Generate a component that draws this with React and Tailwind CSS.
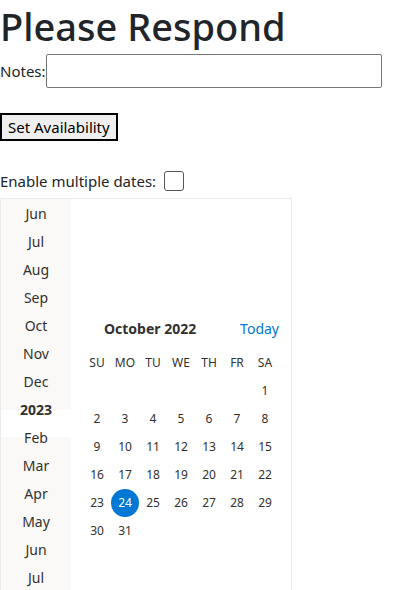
import React from "react";

const months1 = ["Jun", "Jul", "Aug", "Sep", "Oct", "Nov", "Dec"];
const months2 = ["Feb", "Mar", "Apr", "May", "Jun", "Jul"];
const heads = ["SU", "MO", "TU", "WE", "TH", "FR", "SA"];

function weeks() {
  const cells = [];
  for (let i = 0; i < 6; i++) cells.push(null);
  for (let d = 1; d <= 31; d++) cells.push(d);
  const rows = [];
  for (let i = 0; i < cells.length; i += 7) rows.push(cells.slice(i, i + 7));
  return rows;
}

export default function App() {
  return (
    <div className="text-[#212529] bg-white" style={{ fontFamily: '"Noto Sans", sans-serif' }}>
      <h1 className="text-[38px] font-medium leading-[52px] m-0 text-[#212529] whitespace-nowrap">Please Respond</h1>
      <div className="flex items-center h-[38px] text-[15px]">
        <span>Notes:</span>
        <input className="w-[336px] h-[34px] border border-[#767676] rounded-[2px]" />
      </div>
      <div className="h-[23px]" />
      <button className="h-[28px] px-[6px] border-2 border-black bg-[#efefef] text-[15px] text-black leading-none">
        Set Availability
      </button>
      <div className="h-[29px]" />
      <div className="flex items-center h-[22px] text-[15px]">
        <span>Enable multiple dates:</span>
        <span className="ml-[8px] w-[20px] h-[20px] border border-[#555] rounded-[3px] bg-white" />
      </div>
      <div className="mt-[6px] w-[292px] h-[400px] border border-[#edebe9] flex text-[#323130]">
        <div className="relative w-[70px] bg-[#faf9f8] text-[14px] flex flex-col">
          <div className="absolute left-0 top-[211px] w-[71px] h-[27px] bg-white" />
          {months1.map((m, i) => (
            <div key={"a" + i} className="h-[28px] flex items-center justify-center relative">{m}</div>
          ))}
          <div className="h-[28px] flex items-center justify-center font-bold relative">2023</div>
          {months2.map((m, i) => (
            <div key={"b" + i} className="h-[28px] flex items-center justify-center relative">{m}</div>
          ))}
        </div>
        <div className="flex-1 px-[12px] pt-[115px]">
          <div className="flex items-center justify-between h-[28px]">
            <span className="pl-[21px] text-[14px] font-bold">October 2022</span>
            <span className="text-[14px] text-[#0078d4]">Today</span>
          </div>
          <div className="grid grid-cols-7 mt-[7px] text-[12px]">
            {heads.map((h) => (
              <div key={h} className="h-[28px] flex items-center justify-center">{h}</div>
            ))}
          </div>
          {weeks().map((row, ri) => (
            <div key={ri} className="grid grid-cols-7 text-[12px]">
              {row.map((d, ci) => (
                <div key={ci} className="h-[28px] flex items-center justify-center">
                  {d === 24 ? (
                    <span className="w-[28px] h-[28px] rounded-full bg-[#0078d4] text-white flex items-center justify-center">24</span>
                  ) : (
                    d
                  )}
                </div>
              ))}
            </div>
          ))}
        </div>
      </div>
    </div>
  );
}
